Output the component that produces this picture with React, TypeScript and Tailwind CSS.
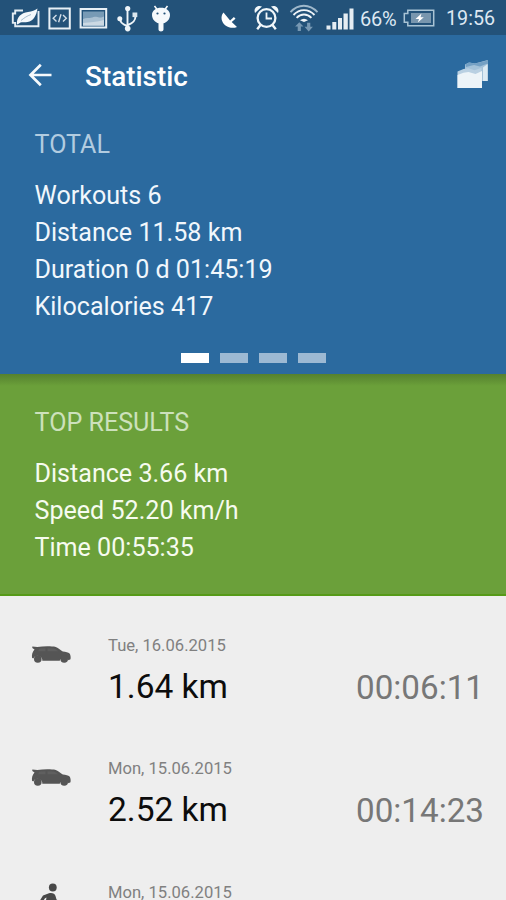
import type { ReactNode } from "react";

function Glyph({ x, w, children }: { x: number; w: number; children: ReactNode }) {
  return (
    <svg width={w} height={36} viewBox={`${x} 0 ${w} 36`} fill="none" className="block shrink-0">
      {children}
    </svg>
  );
}

function StatusBar() {
  return (
    <header className="flex h-[35px] w-full shrink-0 items-start bg-[#235279] text-[#dde8f2]">
      <Glyph x={0} w={44}>
        <path d="M23 10.500H15.200v3h-2.400v9.400h2.400v3.400H38.500V11" stroke="#e4edf4" strokeWidth="1.900" />
        <path d="M17 24c-.5-7 4-11 11-12 4-.6 7-1.500 9.500-3.500-1 7-4 12.500-10 13.500-3 .6-5 0-7 .5l-3 2z" fill="#f4f8fb" />
        <path d="M21 20.500c3-2.500 6-4.500 10-6" stroke="#8fabc0" strokeWidth="0.800" />
      </Glyph>
      <Glyph x={44} w={32}>
        <path d="M49.400 8.400h20.400v20.200H49.400z" stroke="#e8f0f6" strokeWidth="2" />
        <path d="M56.500 15l-3.300 3.200 3.300 3.200M63 15l3.300 3.200-3.300 3.200M61 14.200l-2.400 8" stroke="#d2dee8" strokeWidth="1.400" />
      </Glyph>
      <Glyph x={76} w={36}>
        <path d="M80.600 9h25.600v18.600H80.600z" stroke="#e8f0f6" strokeWidth="2" />
        <path d="M83 11.500h21V17c-5 2.500-8-1-12 1-3 1.500-6 .5-9 2z" fill="#779ab5" />
        <path d="M83 19c3-1.500 6-.5 9-1.500 4-2 7 1.500 12-1v9.500H83z" fill="#a9c0d2" />
        <path d="M83 23c7-1 14-1 21-3v5H83z" fill="#ccd9e3" />
      </Glyph>
      <Glyph x={112} w={32}>
        <path d="M127.500 9v20M128 25c5-2 7.500-4 7.500-9M127 26c-4-1.500-7-3-7-7" stroke="#eff5f9" strokeWidth="1.900" />
        <circle cx="127.700" cy="8.500" r="2.600" fill="#eff5f9" />
        <circle cx="127.700" cy="28.600" r="2.800" fill="#eff5f9" />
        <circle cx="119.800" cy="18.700" r="2.500" fill="#eff5f9" />
        <path d="M132.500 12.500h4.800v4.600h-4.800z" fill="#dbe6ee" />
      </Glyph>
      <Glyph x={144} w={36}>
        <path d="M154.500 6l3 4M167.500 6l-3 4" stroke="#fff" strokeWidth="1.500" />
        <path d="M152 15c0-4.500 4-7.200 9-7.200s9 2.700 9 7.200c0 4.500-3.500 7.500-6.500 8.300v6.200c0 2.500-5 2.500-5 0v-6.200c-3-.8-6.500-3.800-6.500-8.300z" fill="#f5f9fc" />
        <circle cx="157.500" cy="13.500" r="1.100" fill="#235279" />
        <circle cx="164.500" cy="13.500" r="1.100" fill="#235279" />
      </Glyph>
      <div className="flex-1" />
      <Glyph x={214} w={36}>
        <path d="M223.500 12.500c-3.500 4-2 10 2 13 3.500 2.600 8 3 11.500 1.500l-5.300-5 3.800-3.300-1.600-1.600-3.800 3.400z" fill="#fff" />
      </Glyph>
      <Glyph x={250} w={34}>
        <circle cx="266.500" cy="18" r="8.900" stroke="#f2f7fa" strokeWidth="2.300" />
        <path d="M266.500 12.500v6h5.500" stroke="#f2f7fa" strokeWidth="1.800" />
        <path d="M255 13c-2-5 3-8.500 7-6.500zM278 13c2-5-3-8.500-7-6.500z" fill="#f2f7fa" />
        <path d="M260.500 25l-3.300 4.200M272.500 25l3.300 4.200" stroke="#f2f7fa" strokeWidth="2.400" />
      </Glyph>
      <Glyph x={284} w={38}>
        <path d="M290.500 12.200c7.500-8.600 19-8.600 27 0" stroke="#9fb8cb" strokeWidth="1.800" />
        <path d="M293.500 15c6-6.500 15-6.500 21 0" stroke="#f0f5f9" strokeWidth="1.900" />
        <path d="M296.600 17.800c4.300-4.300 10.500-4.300 14.800 0" stroke="#f0f5f9" strokeWidth="1.900" />
        <path d="M300 20.300l4 1.800 4-1.800c-2.600-2-5.400-2-8 0z" fill="#f0f5f9" />
        <path d="M299.300 22.200l-4.200 4.300h2.600v4.500h3.200v-4.500h2.600zM308.700 31.500l-4.200-4.700h2.600v-4h3.200v4h2.600z" fill="#7798b3" />
      </Glyph>
      <Glyph x={322} w={36}>
        <path d="M326.500 25.500h4v4h-4zM332.300 22h4v7.500h-4zM338 18h4v11.500h-4zM343.500 13.500h4.300v16h-4.300zM349.500 8.500h4v21h-4z" fill="#e5edf3" />
      </Glyph>
      <span className="mt-[8px] ml-[2px] block w-[42px] shrink-0 text-[20px] leading-[22px] tracking-[-0.2px] whitespace-nowrap">66%</span>
      <Glyph x={402} w={36}>
        <path d="M407.800 10.200h25.900v15.600h-25.900v-3.600h-3.500v-8.600h3.500z" stroke="#a9c4d5" strokeWidth="1.500" />
        <path d="M411 13h20v10h-20z" fill="#7896ae" />
        <path d="M421.500 13.500l-6 5.500h3.500l-1.200 3.500 6-5.300h-3.300z" fill="#fff" />
      </Glyph>
      <span className="mt-[8px] ml-[8px] block w-[60px] shrink-0 text-[19.700px] leading-[22px] whitespace-nowrap">19:56</span>
    </header>
  );
}

function CarIcon() {
  return (
    <svg width="41" height="21" viewBox="0 0 41 21" className="block" fill="#555555">
      <path d="M1.300 3.400l5 .5c6-.7 14-.8 18.500 0 2.800 1.200 5 3 7 4.700 3 .3 5.500.9 6.800 2 1 1.300 1.300 4 .9 5.700l-2 1a4.700 4.700 0 0 0-8.800.5H11.300a4.700 4.700 0 0 0-9-2.200L1 14.800c-.3-3 .2-5.500 2.500-8.200L1.300 5z" />
      <path d="M8.500 5.500L7 8.300h7.500V5.300zM16.500 5.300v3h11c-1.500-1.300-3-2.400-5-2.900z" fill="#5f5f5f" />
      <circle cx="6.800" cy="16" r="3.800" />
      <circle cx="33.200" cy="16" r="3.800" />
    </svg>
  );
}

function WalkerIcon() {
  return (
    <svg width="40" height="32" viewBox="0 0 40 32" className="block" fill="#484848">
      <circle cx="21.800" cy="4.500" r="3.900" />
      <path d="M8 19l4-6.500 6-2.300c3-.8 6 .3 6.500 2.900l1 3.400 5 3-1.200 2.500-5.500-2.500-1.500 4 3 9h-4l-4-8-5 8H8l6-10 1.500-8-1.500.7-3 4.500z" />
    </svg>
  );
}

type Workout = { date: string; km?: string; time?: string; kind: "car" | "walk" };

const workouts: Workout[] = [
  { date: "Tue, 16.06.2015", km: "1.64 km", time: "00:06:11", kind: "car" },
  { date: "Mon, 15.06.2015", km: "2.52 km", time: "00:14:23", kind: "car" },
  { date: "Mon, 15.06.2015", kind: "walk" },
];

function WorkoutRow({ date, km, time, kind }: Workout) {
  return (
    <li className="flex h-[123.300px] shrink-0 items-start pt-[40px]">
      <div className="ml-[31px] w-[77px] pt-[7px]">
        {kind === "car" ? <CarIcon /> : <div className="-mt-[7px]"><WalkerIcon /></div>}
      </div>
      <div className="w-[248px]">
        <div className="text-[16.600px] leading-[20px] text-[#808080]">{date}</div>
        {km && <div className="mt-[10.500px] text-[33.500px] leading-[40px] text-[#0c0c0c]">{km}</div>}
      </div>
      {time && <div className="mt-[31.500px] text-[33.200px] leading-[40px] text-[#777777]">{time}</div>}
    </li>
  );
}

export default function App() {
  return (
    <div className="flex h-[900px] w-[506px] flex-col overflow-hidden bg-[#eeeeee] font-['Roboto',sans-serif]">
      <StatusBar />
      <section className="flex h-[339px] shrink-0 flex-col bg-[#2b6a9f] text-[#f1f7fc]">
        <div className="flex h-[82px] items-center pl-[28px] pr-[16px]">
          <svg width="25" height="24" viewBox="0 0 25 24" fill="none" stroke="#f5f9fc" strokeWidth="2.700" className="mt-[-2px] mr-[32px]">
            <path d="M23.500 12H3M12.800 1.800L2.500 12l10.300 10.200" />
          </svg>
          <h1 className="mt-[2px] flex-1 text-[27.900px] font-medium leading-[32px] text-white">Statistic</h1>
          <svg width="34" height="32" viewBox="0 0 34 32" className="mt-[-6px]">
            <path d="M9 7.500l4-2 6 1 12.700-3.500v21H25V14H9z" fill="#a4c2d9" />
            <path d="M10 10l8-2 6 1.500 7.700-3v-3L19 6.500l-6-1-3.500 2z" fill="#74a0c4" />
            <path d="M27 10.500l4.700-3.500v17H27z" fill="#dceaf3" />
            <path d="M1.500 14.500l6-2.500 5-.8 6 2 7-2.500V31H1.500z" fill="#b9d0e2" />
            <path d="M1.500 18l6-2.200 5-.8 7 2 6.500-3V31H1.500z" fill="#edf4f8" />
          </svg>
        </div>
        <div className="pl-[34.500px] text-[25.100px] leading-[37px]">
          <h2 className="mt-[9px] text-[#b2cce0]">TOTAL</h2>
          <div className="mt-[14px]">
            <p>Workouts 6</p>
            <p>Distance 11.58 km</p>
            <p>Duration 0 d 01:45:19</p>
            <p>Kilocalories 417</p>
          </div>
        </div>
        <div className="mt-[28px] flex justify-center gap-[10.500px] pl-[1px]">
          <span className="h-[9.500px] w-[28.500px] bg-white" />
          <span className="h-[9.500px] w-[28.500px] bg-[#9cb9d3]" />
          <span className="h-[9.500px] w-[28.500px] bg-[#9cb9d3]" />
          <span className="h-[9.500px] w-[28.500px] bg-[#9cb9d3]" />
        </div>
      </section>
      <section className="flex h-[222px] shrink-0 flex-col border-b-2 border-[#569a18] bg-[#6ba03a] text-[25.100px] leading-[37px] text-[#f6fbef]">
        <div className="h-[12px] bg-linear-to-b from-[#55812e] to-[#6ba03a]" />
        <div className="pl-[34.500px]">
          <h2 className="mt-[18px] text-[#cde1bc]">TOP RESULTS</h2>
          <div className="mt-[14px]">
            <p>Distance 3.66 km</p>
            <p>Speed 52.20 km/h</p>
            <p>Time 00:55:35</p>
          </div>
        </div>
      </section>
      <ul>
        {workouts.map((w, i) => (
          <WorkoutRow key={i} {...w} />
        ))}
      </ul>
    </div>
  );
}
